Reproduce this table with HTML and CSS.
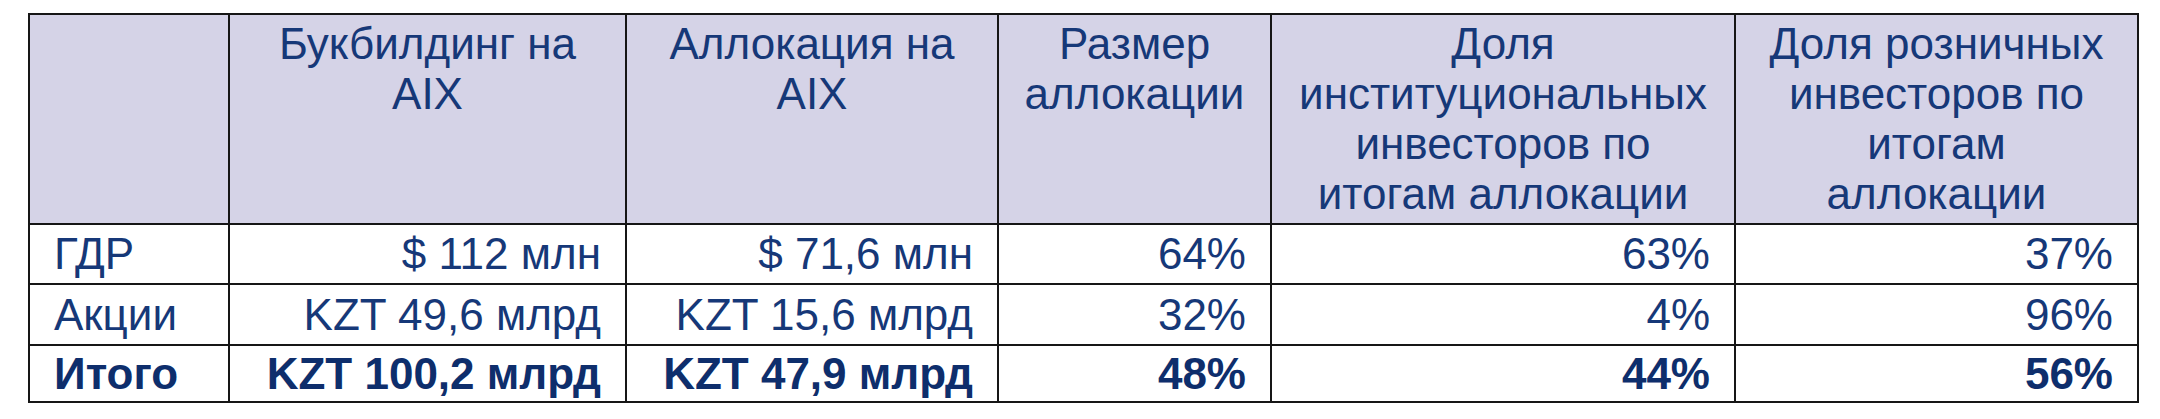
FILE: index.html
```html
<!DOCTYPE html>
<html lang="ru">
<head>
<meta charset="utf-8">
<title>Аллокация на AIX</title>
<link rel="stylesheet" href="styles.css">
</head>
<body>
<table class="alloc">
  <colgroup>
    <col class="c1"><col class="c2"><col class="c3"><col class="c4"><col class="c5"><col class="c6">
  </colgroup>
  <thead>
    <tr class="head">
      <th></th>
      <th>Букбилдинг на<br>AIX</th>
      <th>Аллокация на<br>AIX</th>
      <th>Размер<br>аллокации</th>
      <th>Доля<br>институциональных<br>инвесторов по<br>итогам аллокации</th>
      <th>Доля розничных<br>инвесторов по<br>итогам<br>аллокации</th>
    </tr>
  </thead>
  <tbody>
    <tr class="r1">
      <td class="label">ГДР</td>
      <td>$ 112 млн</td>
      <td>$ 71,6 млн</td>
      <td>64%</td>
      <td>63%</td>
      <td>37%</td>
    </tr>
    <tr class="r2">
      <td class="label">Акции</td>
      <td>KZT 49,6 млрд</td>
      <td>KZT 15,6 млрд</td>
      <td>32%</td>
      <td>4%</td>
      <td>96%</td>
    </tr>
    <tr class="r3 total">
      <td class="label">Итого</td>
      <td>KZT 100,2 млрд</td>
      <td>KZT 47,9 млрд</td>
      <td>48%</td>
      <td>44%</td>
      <td>56%</td>
    </tr>
  </tbody>
</table>
</body>
</html>
```
FILE: styles.css
```css
html, body {
  margin: 0;
  padding: 0;
  background: #ffffff;
}

body {
  padding: 13px 0 0 28px;
  font-family: "Liberation Sans", Arial, sans-serif;
}

.alloc {
  border-collapse: collapse;
  table-layout: fixed;
  width: 2109px;
  color: #163878;
  font-size: 44px;
  line-height: 50px;
}

.c1 { width: 200px; }
.c2 { width: 397px; }
.c3 { width: 372px; }
.c4 { width: 273px; }
.c5 { width: 464px; }
.c6 { width: 403px; }

.alloc th,
.alloc td {
  border: 2px solid #161616;
  padding: 0 24px;
}

.alloc th {
  background: #d5d3e7;
  font-weight: normal;
  text-align: center;
  vertical-align: top;
  white-space: nowrap;
  padding-top: 4px;
}

.head { height: 210px; }
.r1 { height: 60px; }
.r2 { height: 61px; }
.r3 { height: 57px; }

.alloc td {
  text-align: right;
  vertical-align: middle;
  white-space: nowrap;
}

.alloc td.label {
  text-align: left;
}

.total td {
  font-weight: bold;
  color: #0e2e6c;
}
```
